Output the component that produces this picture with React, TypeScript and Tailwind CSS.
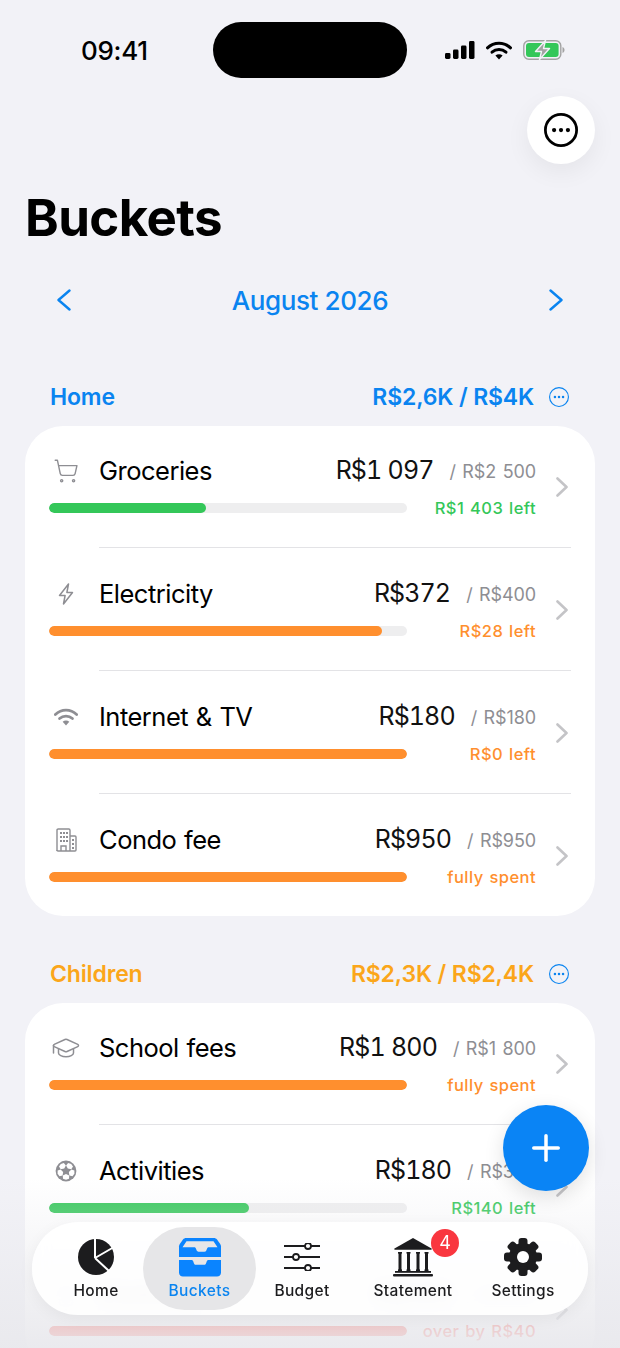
import type { ReactNode } from 'react';
import { Plus, ShoppingCart, GraduationCap, Shirt } from 'lucide-react';

// --- small hand drawn icons ---

function DotsCircle({ size, stroke, className }: { size: number; stroke: number; className: string }) {
  return (
    <svg width={size} height={size} viewBox="0 0 32 32" className={className} fill="none">
      <circle cx="16" cy="16" r={16 - stroke / 2} stroke="currentColor" strokeWidth={stroke} />
      <circle cx="9.5" cy="16" r="2" fill="currentColor" />
      <circle cx="16" cy="16" r="2" fill="currentColor" />
      <circle cx="22.5" cy="16" r="2" fill="currentColor" />
    </svg>
  );
}

function Chevron({ dir, width, height, stroke, color }: { dir: 'left' | 'right'; width: number; height: number; stroke: number; color: string }) {
  const d = dir === 'right' ? `M1.5 1.5 ${width - 1.5} ${height / 2} 1.5 ${height - 1.5}` : `M${width - 1.5} 1.5 1.5 ${height / 2} ${width - 1.5} ${height - 1.5}`;
  return (
    <svg width={width} height={height} viewBox={`0 0 ${width} ${height}`} fill="none" className="shrink-0">
      <path d={d} stroke={color} strokeWidth={stroke} strokeLinecap="round" strokeLinejoin="round" />
    </svg>
  );
}

function Signal() {
  return (
    <svg width="30" height="18" viewBox="0 0 30 18" fill="black">
      <rect x="0" y="12" width="5.5" height="6" rx="1.4" />
      <rect x="8" y="8.5" width="5.5" height="9.5" rx="1.4" />
      <rect x="16" y="4.5" width="5.5" height="13.5" rx="1.4" />
      <rect x="24" y="0" width="5.5" height="18" rx="1.4" />
    </svg>
  );
}

function WifiGlyph({ width, height, color }: { width: number; height: number; color: string }) {
  return (
    <svg width={width} height={height} viewBox="0 0 26 19" fill="none">
      <path d="M1.5 6.8C8 0.6 18 0.6 24.5 6.8" stroke={color} strokeWidth="3" strokeLinecap="round" />
      <path d="M6 11.2C10 7.6 16 7.6 20 11.2" stroke={color} strokeWidth="3" strokeLinecap="round" />
      <path d="M9.4 14.6C11.4 12.9 14.6 12.9 16.6 14.6L13 18.6Z" fill={color} />
    </svg>
  );
}

function Battery() {
  return (
    <svg width="42" height="20" viewBox="0 0 42 20" fill="none">
      <rect x="0.8" y="0.8" width="37" height="18.4" rx="5" stroke="#a3a3a3" strokeWidth="1.4" />
      <rect x="3" y="3" width="32.6" height="14" rx="3" fill="#34c759" />
      <path d="M39.5 7v6c1.3-.5 2-1.6 2-3s-.7-2.5-2-3Z" fill="#a3a3a3" />
      <path d="M22.5 0.5 12.5 11.5h6l-2 8 10-11h-6Z" fill="#a3a3a3" stroke="#f2f2f7" strokeWidth="1.4" strokeLinejoin="round" />
    </svg>
  );
}

function Bolt() {
  return (
    <svg width="16" height="22" viewBox="0 0 16 22" fill="none">
      <path d="M10.5 1 1.5 12.5h5.6L5.5 21l9-11.5H8.9Z" stroke="#8e8e93" strokeWidth="1.5" strokeLinejoin="round" />
    </svg>
  );
}

function Building() {
  return (
    <svg width="21" height="24" viewBox="0 0 21 24" fill="none" stroke="#8e8e93">
      <path d="M1 23V2.2C1 1.5 1.5 1 2.2 1h10.6c.7 0 1.2.5 1.2 1.2V23" strokeWidth="1.4" />
      <path d="M14 8h5c.6 0 1 .4 1 1v13c0 .6-.4 1-1 1H2c-.6 0-1-.4-1-1" strokeWidth="1.4" />
      <path d="M5 23v-5h5v5" strokeWidth="1.4" />
      <g fill="#8e8e93" stroke="none">
        <rect x="4" y="4" width="2" height="2" />
        <rect x="7" y="4" width="2" height="2" />
        <rect x="10" y="4" width="2" height="2" />
        <rect x="4" y="8" width="2" height="2" />
        <rect x="7" y="8" width="2" height="2" />
        <rect x="10" y="8" width="2" height="2" />
        <rect x="4" y="12" width="2" height="2" />
        <rect x="7" y="12" width="2" height="2" />
        <rect x="10" y="12" width="2" height="2" />
        <rect x="16" y="11" width="2" height="2" />
        <rect x="16" y="15" width="2" height="2" />
        <rect x="16" y="19" width="2" height="2" />
      </g>
    </svg>
  );
}

function SoccerBall() {
  const panels = [36, 108, 180, 252, 324];
  return (
    <svg width="22" height="22" viewBox="0 0 22 22">
      <circle cx="11" cy="11" r="10.4" fill="#8e8e93" />
      {panels.map((deg) => (
        <path key={deg} d="M8 3.2 11 2.2 14 3.2 14.2 6.4 11 8 7.8 6.4Z" fill="white" transform={`rotate(${deg} 11 11)`} />
      ))}
    </svg>
  );
}

function PieTab() {
  return (
    <svg width="38" height="38" viewBox="0 0 38 38">
      <circle cx="19" cy="19" r="18" fill="#1c1c1e" />
      <path d="M18 20V0M18 20 37 9M18 20 32 33" stroke="white" strokeWidth="2" fill="none" />
    </svg>
  );
}

function TrayTab() {
  return (
    <svg width="44" height="40" viewBox="0 0 44 40">
      <path d="M1 9.5C1 8.6 1.3 7.8 1.8 7L5 2.5C5.8 1.5 7 1 8 1h28c1 0 2.2.5 3 1.5L42.2 7c.5.8.8 1.6.8 2.5V20H1Z" fill="#0a84ff" />
      <path d="M8.5 4.2h27l4 6h-8.6c-1 0-1.4.4-1.8 1.2l-.8 2.2c-.4.8-.9 1.2-1.8 1.2h-6c-.9 0-1.4-.4-1.8-1.2l-.8-2.2c-.4-.8-.8-1.2-1.8-1.2H4.5Z" fill="#e6e6e8" />
      <path d="M1 23h12.5c.8 0 1.3.4 1.6 1.1l.9 2.4c.3.8.9 1.3 1.8 1.3h8.4c.9 0 1.5-.5 1.8-1.3l.9-2.4c.3-.7.8-1.1 1.6-1.1H43v12.5c0 2.5-1.7 4-4 4H5c-2.3 0-4-1.5-4-4Z" fill="#0a84ff" />
    </svg>
  );
}

function SlidersTab() {
  return (
    <svg width="36" height="28" viewBox="0 0 36 28" fill="white" stroke="#1c1c1e" strokeWidth="2.2">
      <path d="M0 3h36M0 14h36M0 25h36" />
      <circle cx="24" cy="3" r="3" strokeWidth="1.8" />
      <circle cx="12" cy="14" r="3" strokeWidth="1.8" />
      <circle cx="24" cy="25" r="3" strokeWidth="1.8" />
    </svg>
  );
}

function BankTab() {
  const columns = [5, 13.5, 23, 31.5];
  return (
    <svg width="40" height="39" viewBox="0 0 40 39" fill="#1c1c1e">
      <path d="M20 0 38.5 10.5c.5.4.3 1.2-.4 1.2H1.9c-.7 0-.9-.8-.4-1.2Z" />
      {columns.map((x) => (
        <g key={x}>
          <rect x={x} y="14" width="4" height="1.6" />
          <rect x={x + 0.5} y="15" width="3" height="17" />
          <rect x={x} y="31.4" width="4" height="1.6" />
        </g>
      ))}
      <rect x="2" y="33" width="36" height="1.8" />
      <rect x="0" y="36" width="40" height="2.6" rx="1" />
    </svg>
  );
}

function GearTab() {
  const teeth = [0, 45, 90, 135, 180, 225, 270, 315];
  return (
    <svg width="38" height="38" viewBox="0 0 38 38" fill="#1c1c1e">
      <circle cx="19" cy="19" r="14" />
      {teeth.map((deg) => (
        <rect key={deg} x="14.5" y="0" width="9" height="10" rx="3" transform={`rotate(${deg} 19 19)`} />
      ))}
      <circle cx="19" cy="19" r="6" fill="white" />
    </svg>
  );
}

// --- data ---

type Tone = 'green' | 'orange' | 'red';

interface Bucket {
  name: string;
  icon: ReactNode;
  spent: string;
  limit: string;
  caption: string;
  tone: Tone;
  percent: number;
}

const barColor = { green: 'bg-[#34c759]', orange: 'bg-[#ff8f2e]', red: 'bg-[#ff3b30]' };
const captionColor = { green: 'text-[#34c759]', orange: 'text-[#ff8f2e]', red: 'text-[#ff3b30]' };

const homeBuckets: Bucket[] = [
  {
    name: 'Groceries',
    icon: <ShoppingCart size={26} strokeWidth={1.3} color="#8e8e93" />,
    spent: 'R$1 097',
    limit: '/ R$2 500',
    caption: 'R$1 403 left',
    tone: 'green',
    percent: 43.9,
  },
  { name: 'Electricity', icon: <Bolt />, spent: 'R$372', limit: '/ R$400', caption: 'R$28 left', tone: 'orange', percent: 93 },
  {
    name: 'Internet & TV',
    icon: <WifiGlyph width={24} height={18} color="#8e8e93" />,
    spent: 'R$180',
    limit: '/ R$180',
    caption: 'R$0 left',
    tone: 'orange',
    percent: 100,
  },
  { name: 'Condo fee', icon: <Building />, spent: 'R$950', limit: '/ R$950', caption: 'fully spent', tone: 'orange', percent: 100 },
];

const childrenBuckets: Bucket[] = [
  {
    name: 'School fees',
    icon: <GraduationCap size={30} strokeWidth={1.2} color="#8e8e93" className="-scale-x-100" />,
    spent: 'R$1 800',
    limit: '/ R$1 800',
    caption: 'fully spent',
    tone: 'orange',
    percent: 100,
  },
  { name: 'Activities', icon: <SoccerBall />, spent: 'R$180', limit: '/ R$320', caption: 'R$140 left', tone: 'green', percent: 56 },
  {
    name: 'Clothing',
    icon: <Shirt size={26} strokeWidth={1.3} color="#8e8e93" />,
    spent: 'R$380',
    limit: '/ R$340',
    caption: 'over by R$40',
    tone: 'red',
    percent: 100,
  },
];

const tabs = [
  { label: 'Home', icon: <PieTab />, width: 'w-[94px]' },
  { label: 'Buckets', icon: <TrayTab />, width: 'w-[113px]', active: true },
  { label: 'Budget', icon: <SlidersTab />, width: 'w-[92px]' },
  { label: 'Statement', icon: <BankTab />, width: 'w-[130px]', badge: 4 },
  { label: 'Settings', icon: <GearTab />, width: 'w-[90px]' },
];

// --- pieces ---

function BucketRow({ bucket, first }: { bucket: Bucket; first: boolean }) {
  return (
    <div className={`flex items-center pl-6 pb-[27px] ${first ? 'pt-7' : 'pt-[29px]'}`}>
      <div className="w-[487px] shrink-0">
        <div className="flex h-8 items-center pt-0.5">
          <div className="flex w-[34px] justify-center">{bucket.icon}</div>
          <span className="ml-4 text-[25.5px] tracking-[-0.5px] text-black [word-spacing:1px]">{bucket.name}</span>
          <span className="ml-auto text-[25px] tracking-[-0.9px] text-[#111] tabular-nums [word-spacing:0.5px]">{bucket.spent}</span>
          <span className="ml-4 text-[18px] tracking-[-0.1px] text-[#8e8e93] [word-spacing:1.5px]">{bucket.limit}</span>
        </div>
        <div className="mt-2.5 flex h-6 items-center justify-between">
          <div className="h-2.5 w-[358px] overflow-hidden rounded-full bg-[#eeeeef]">
            <div className={`h-full rounded-full ${barColor[bucket.tone]}`} style={{ width: `${bucket.percent}%` }} />
          </div>
          <span className={`text-[16.5px] font-[450] tracking-[0.45px] [word-spacing:1px] ${captionColor[bucket.tone]}`}>{bucket.caption}</span>
        </div>
      </div>
      <div className="ml-5">
        <Chevron dir="right" width={12} height={20} stroke={2.6} color="#c4c4c7" />
      </div>
    </div>
  );
}

function Section({ title, total, color, buckets }: { title: string; total: string; color: string; buckets: Bucket[] }) {
  return (
    <section>
      <div className={`flex h-8 items-center pl-[25px] pr-[26px] pt-0.5 text-[23px] font-semibold tracking-[-0.15px] ${color}`}>
        <span>{title}</span>
        <span className="ml-auto">{total}</span>
        <DotsCircle size={20} stroke={1.8} className="ml-[15px] text-[#0a84f0]" />
      </div>
      <div className="mt-3.5 rounded-[38px] bg-white">
        {buckets.map((bucket, i) => (
          <div key={bucket.name}>
            {i > 0 && <div className="ml-[74px] mr-6 h-px bg-[#e3e3e6]" />}
            <BucketRow bucket={bucket} first={i === 0} />
          </div>
        ))}
      </div>
    </section>
  );
}

export default function App() {
  return (
    <div className="relative h-[1348px] w-[620px] overflow-hidden bg-[#f2f2f7] font-['Inter','Liberation_Sans',sans-serif]">
      {/* status bar */}
      <div className="grid grid-cols-[213px_194px_213px] pt-[22px]">
        <div className="flex items-center pl-[81px] text-[26px] font-medium tracking-[-0.3px] text-black">09:41</div>
        <div className="h-14 rounded-full bg-black" />
        <div className="flex items-center gap-[11px] pl-[38px]">
          <Signal />
          <WifiGlyph width={26} height={19} color="black" />
          <Battery />
        </div>
      </div>

      <div className="mt-[18px] flex justify-end pr-[25px]">
        <button className="flex h-[68px] w-[68px] items-center justify-center rounded-full bg-white shadow-[0_8px_24px_rgba(0,0,0,0.06)]">
          <DotsCircle size={34} stroke={2.6} className="text-black" />
        </button>
      </div>

      <h1 className="mt-6 h-14 pl-[25px] pt-0.5 text-[51px] leading-[56px] font-bold tracking-[-0.6px] text-black">Buckets</h1>

      <div className="mt-10 flex h-8 items-center justify-between px-[57px] text-[#0a84f0]">
        <Chevron dir="left" width={14} height={22} stroke={2.4} color="#0a84f0" />
        <span className="text-[26px] font-medium tracking-[-0.4px]">August 2026</span>
        <Chevron dir="right" width={14} height={22} stroke={2.4} color="#0a84f0" />
      </div>

      <div className="mt-16 flex flex-col gap-[41px] px-[25px]">
        <Section title="Home" total="R$2,6K / R$4K" color="text-[#0a84f0]" buckets={homeBuckets} />
        <Section title="Children" total="R$2,3K / R$2,4K" color="text-[#fba61a]" buckets={childrenBuckets} />
      </div>

      {/* fade under the tab bar */}
      <div className="pointer-events-none absolute inset-x-0 bottom-0 h-[170px] bg-gradient-to-b from-[#e9e9ed]/0 to-[#e9e9ed]/95" />

      <button className="absolute left-[503px] top-[1105px] flex h-[86px] w-[86px] items-center justify-center rounded-full bg-[#0a84f5] text-white shadow-[0_6px_20px_rgba(0,0,0,0.12)]">
        <Plus size={42} strokeWidth={2} />
      </button>

      {/* tab bar */}
      <nav className="absolute left-8 top-[1222px] flex h-[93px] w-[556px] items-center rounded-[46px] bg-white/90 pl-[17px] shadow-[0_4px_16px_rgba(0,0,0,0.05)] backdrop-blur-sm">
        {tabs.map((tab) => (
          <div
            key={tab.label}
            className={`relative flex h-[83px] shrink-0 flex-col items-center rounded-[42px] ${tab.width} ${tab.active ? 'bg-[#e6e6e8]' : ''}`}
          >
            <div className="flex h-[50px] items-center pt-2.5">
              <div className="relative flex">
                {tab.icon}
                {tab.badge && (
                  <span className="absolute -right-[26px] -top-[9px] flex h-7 w-7 items-center justify-center rounded-full bg-[#f9363f] text-[18px] text-white">
                    {tab.badge}
                  </span>
                )}
              </div>
            </div>
            <span className={`mt-0.5 text-[15.5px] font-medium tracking-[0.35px] ${tab.active ? 'text-[#0a84f0]' : 'text-[#1c1c1e]'}`}>{tab.label}</span>
          </div>
        ))}
      </nav>
    </div>
  );
}
